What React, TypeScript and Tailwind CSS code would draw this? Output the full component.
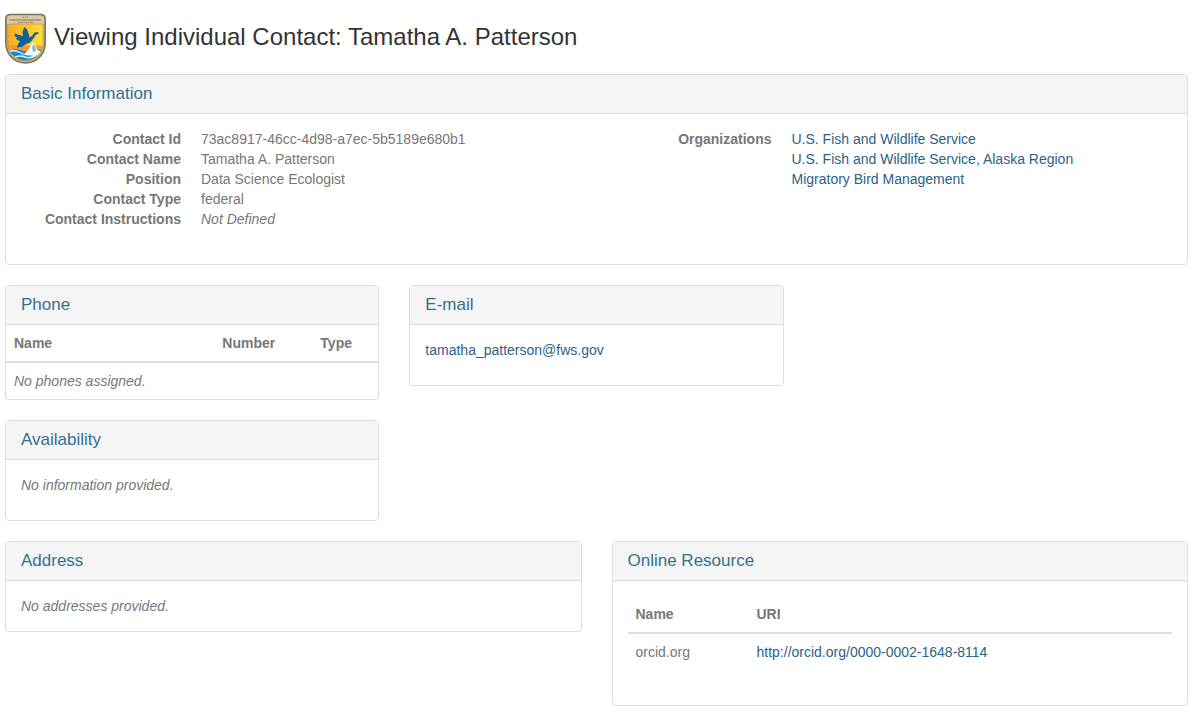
import type { ReactNode } from "react";

function Crest() {
  return (
    <svg viewBox="0 0 41 51" className="h-[51px] w-[41px] shrink-0" role="img" aria-label="U.S. Fish and Wildlife Service">
      <defs>
        <clipPath id="scene">
          <path d="M4.500 11H36.500Q38.200 11 38.200 13V30C38.200 40 30 47.500 20.500 47.500C11 47.500 2.800 40 2.800 30V13Q2.800 11 4.500 11z" />
        </clipPath>
        <linearGradient id="sky" x1="0" y1="0" x2="1" y2="0">
          <stop offset="0" stopColor="#f9ab22" />
          <stop offset="0.550" stopColor="#fdc52a" />
          <stop offset="1" stopColor="#fde03a" />
        </linearGradient>
      </defs>
      <path d="M5.500 1.500H35.500Q40.200 1.500 40.200 6V30C40.200 42 31 50 20.500 50C10 50 .8 42 .8 30V6Q.8 1.500 5.500 1.500z" fill="#c4ae85" stroke="#7d6e55" strokeWidth="1.500" />
      <path d="M5.500 2.600H35.500Q38.900 2.600 38.900 6V11H2.100V6Q2.100 2.600 5.500 2.600z" fill="#dac9a6" />
      <path d="M17.500 4.300h6" stroke="#a89776" strokeWidth="1.200" strokeDasharray="1.500 .7" />
      <path d="M4.500 6.900h32" stroke="#9a8968" strokeWidth="1.500" strokeDasharray="2 .4" />
      <path d="M12.500 9.400h16" stroke="#a89776" strokeWidth="1.200" strokeDasharray="2 .5" />
      <g clipPath="url(#scene)">
        <rect x="2" y="10" width="37" height="39" fill="url(#sky)" />
        <path d="M2 32h12l7 1 8-1 10 1v5H2z" fill="#f49a28" />
        <path d="M2 38l9-2 8 2 20-1v12H2z" fill="#1f86c6" />
        <path d="M20 40l4-4 2-5 3-2 2 4 1 4 5 2v3l-8 1-8-1z" fill="#f2fafc" />
        <path d="M27 34l2-3 1.500 3 .5 4-3 1z" fill="#8fbad0" />
        <path d="M4 38.500q6-2 11 1t10 1.500M10 44q6-2 10 0t11-1.500" fill="none" stroke="#e2f4fa" strokeWidth="1.400" />
      </g>
      <path d="M10 20.500l4 1.500 4 1-.5-4.500 2-4.500 2.500 2.500 2 5 .5 3 2.500-1.500 2.500-3.500 3-.5 1.500 1.500-3 1-2.500 4-3.500 4-4 1.500-4 3-5.500.5 2-4 1.500-2-4-2.500 1-1.500-2.500-1.500z" fill="#14609f" />
      <path d="M4.500 11H36.500Q38.200 11 38.200 13V30C38.200 40 30 47.500 20.500 47.500C11 47.500 2.800 40 2.800 30V13Q2.800 11 4.500 11z" fill="none" stroke="#b09761" strokeWidth=".7" />
    </svg>
  );
}

function Panel({ title, children }: { title: string; children: ReactNode }) {
  return (
    <section className="rounded border border-[#ddd] bg-white">
      <h2 className="rounded-t-[3px] border-b border-[#ddd] bg-[#f5f5f5] px-[15px] py-2.5 text-[17px] leading-[18px] text-[#31708f]">
        {title}
      </h2>
      {children}
    </section>
  );
}

function Row({ label, children }: { label: string; children: ReactNode }) {
  return (
    <div className="flex gap-5">
      <dt className="w-40 shrink-0 text-right font-bold">{label}</dt>
      <dd>{children}</dd>
    </div>
  );
}

const link = "text-[#2d5f87] hover:underline";

const organizations = [
  "U.S. Fish and Wildlife Service",
  "U.S. Fish and Wildlife Service, Alaska Region",
  "Migratory Bird Management",
];

export default function App() {
  return (
    <main className="bg-white pt-[13px] pr-2.5 pb-1.5 pl-[5px] font-['Liberation_Sans',Arial,sans-serif] text-[14px] leading-5 text-[#777]">
      <header className="mb-2.5 flex gap-2">
        <Crest />
        <h1 className="pt-2.5 text-[24px] leading-[28px] text-[#333]">Viewing Individual Contact: Tamatha A. Patterson</h1>
      </header>

      <Panel title="Basic Information">
        <div className="grid grid-cols-2 gap-[30px] px-[15px] pt-[15px] pb-[35px]">
          <dl>
            <Row label="Contact Id">73ac8917-46cc-4d98-a7ec-5b5189e680b1</Row>
            <Row label="Contact Name">Tamatha A. Patterson</Row>
            <Row label="Position">Data Science Ecologist</Row>
            <Row label="Contact Type">federal</Row>
            <Row label="Contact Instructions"><em>Not Defined</em></Row>
          </dl>
          <dl>
            <Row label="Organizations">
              <ul>
                {organizations.map((name) => (
                  <li key={name}><a href="#" className={link}>{name}</a></li>
                ))}
              </ul>
            </Row>
          </dl>
        </div>
      </Panel>

      <div className="mt-5 grid grid-cols-3 items-start gap-[30px]">
        <div className="flex flex-col gap-5">
          <Panel title="Phone">
            <table className="w-full table-fixed text-left">
              <thead>
                <tr className="border-b-2 border-[#ddd]">
                  <th className="p-2">Name</th>
                  <th className="w-[98px] p-2">Number</th>
                  <th className="w-[66px] p-2">Type</th>
                </tr>
              </thead>
              <tbody>
                <tr><td colSpan={3} className="p-2 italic">No phones assigned.</td></tr>
              </tbody>
            </table>
          </Panel>
          <Panel title="Availability">
            <p className="px-[15px] pt-[15px] pb-[25px] italic">No information provided.</p>
          </Panel>
        </div>
        <Panel title="E-mail">
          <p className="px-[15px] pt-[15px] pb-[25px]">
            <a href="mailto:tamatha_patterson@fws.gov" className={link}>tamatha_patterson@fws.gov</a>
          </p>
        </Panel>
      </div>

      <div className="mt-5 grid grid-cols-2 items-start gap-[30px]">
        <Panel title="Address">
          <p className="p-[15px] italic">No addresses provided.</p>
        </Panel>
        <Panel title="Online Resource">
          <div className="px-[15px] pt-[15px] pb-[35px]">
            <table className="w-full table-fixed text-left">
              <thead>
                <tr className="border-b-2 border-[#ddd]">
                  <th className="w-[121px] p-2">Name</th>
                  <th className="p-2">URI</th>
                </tr>
              </thead>
              <tbody>
                <tr>
                  <td className="p-2">orcid.org</td>
                  <td className="p-2">
                    <a href="http://orcid.org/0000-0002-1648-8114" className={link}>http://orcid.org/0000-0002-1648-8114</a>
                  </td>
                </tr>
              </tbody>
            </table>
          </div>
        </Panel>
      </div>
    </main>
  );
}
